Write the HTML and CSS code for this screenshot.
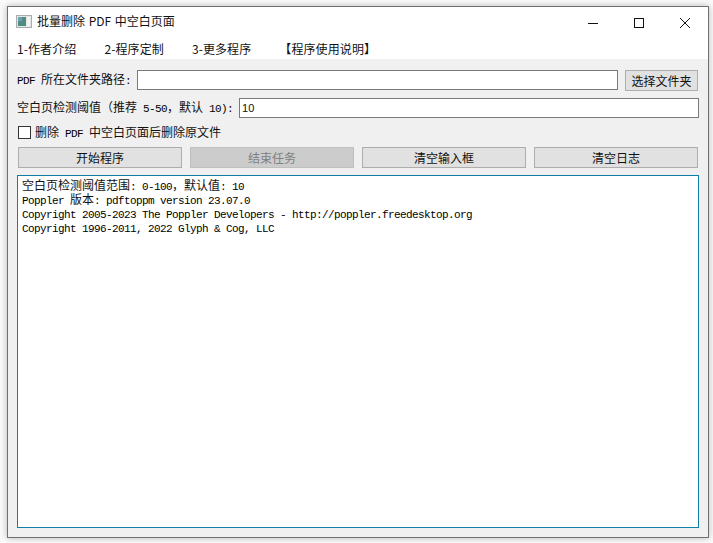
FILE: index.html
```html
<!DOCTYPE html>
<html lang="zh">
<head>
<meta charset="utf-8">
<title>批量删除 PDF 中空白页面</title>
<link rel="stylesheet" href="styles.css">
</head>
<body>
<div class="window">
  <div class="titlebar">
    <svg class="app-icon" width="16" height="13" viewBox="0 0 16 13">
      <rect x="0.5" y="0.5" width="15" height="12" fill="#e4e6e6" stroke="#a9adad"/>
      <rect x="2" y="2" width="8" height="9" fill="#4f8c84"/>
      <rect x="2" y="2" width="4" height="4" fill="#6f9fb0"/>
      <rect x="11" y="2" width="3" height="9" fill="#f3f3f3"/>
    </svg>
    <span class="title">批量删除 PDF 中空白页面</span>
    <div class="controls">
      <svg class="ctl" width="46" height="30" viewBox="0 0 46 30"><path d="M18 15.500H28" stroke="#111" fill="none"/></svg>
      <svg class="ctl" width="46" height="30" viewBox="0 0 46 30"><rect x="18.500" y="10.500" width="9" height="9" stroke="#111" fill="none"/></svg>
      <svg class="ctl" width="46" height="30" viewBox="0 0 46 30"><path d="M18 10L28 20M28 10L18 20" stroke="#111" fill="none"/></svg>
    </div>
  </div>
  <div class="menubar">
    <span class="menu-item">1-作者介绍</span>
    <span class="menu-item">2-程序定制</span>
    <span class="menu-item">3-更多程序</span>
    <span class="menu-item">【程序使用说明】</span>
  </div>
  <div class="content">
    <div class="row row-path">
      <label class="label"><span class="lat">PDF&nbsp;</span>所在文件夹路径<span class="lat">:</span></label>
      <div class="field field-grow"></div>
      <button class="btn btn-pick">选择文件夹</button>
    </div>
    <div class="row row-threshold">
      <label class="label">空白页检测阈值（推荐<span class="lat">&nbsp;5-50</span>，默认<span class="lat">&nbsp;10):</span></label>
      <div class="field field-grow field-value">10</div>
    </div>
    <div class="row row-check">
      <span class="checkbox"></span>
      <span class="label">删除<span class="lat">&nbsp;PDF&nbsp;</span>中空白页面后删除原文件</span>
    </div>
    <div class="actions">
      <button class="btn">开始程序</button>
      <button class="btn btn-disabled">结束任务</button>
      <button class="btn">清空输入框</button>
      <button class="btn">清空日志</button>
    </div>
    <div class="log">
      <div class="log-line">空白页检测阈值范围<span class="lat">: 0-100</span>，默认值<span class="lat">: 10</span></div>
      <div class="log-line"><span class="lat">Poppler&nbsp;</span>版本<span class="lat">: pdftoppm version 23.07.0</span></div>
      <div class="log-line"><span class="lat">Copyright 2005-2023 The Poppler Developers - http://poppler.freedesktop.org</span></div>
      <div class="log-line"><span class="lat">Copyright 1996-2011, 2022 Glyph &amp; Cog, LLC</span></div>
    </div>
  </div>
</div>
</body>
</html>
```
FILE: styles.css
```css
* { box-sizing: border-box; }
html, body { margin: 0; height: 100%; }
body {
  background: #fbfbfb;
  padding: 6px 0 0 7px;
  font-family: "Noto Sans CJK SC", "Liberation Sans", sans-serif;
  font-size: 12px;
  color: #111;
  overflow: hidden;
}
.window {
  width: 702px;
  height: 532px;
  border: 1px solid #707070;
  background: #f0f0f0;
  box-shadow: 0 0 7px rgba(0, 0, 0, 0.28);
  display: flex;
  flex-direction: column;
}
.titlebar {
  height: 31px;
  background: #fff;
  display: flex;
  align-items: center;
  padding-left: 8px;
  flex: none;
}
.app-icon { margin: -2px 5px 0 0; }
.title { font-size: 12px; line-height: 16px; margin-top: -3px; word-spacing: 1px; }
.controls { margin-left: auto; display: flex; }
.ctl { display: block; }
.menubar {
  height: 21px;
  background: #fff;
  display: flex;
  align-items: center;
  padding-left: 9px;
  flex: none;
}
.menu-item { margin-right: 28px; line-height: 16px; letter-spacing: 0.1px; }
.content {
  flex: 1;
  min-height: 0;
  display: flex;
  flex-direction: column;
  padding: 11px 9px 9px 9px;
}
.row { display: flex; align-items: center; }
.row-path { height: 21px; }
.row-path .label { margin-top: -2px; }
.row-threshold { height: 20px; margin-top: 7px; }
.row-check { height: 14px; margin-top: 7px; }
.label { white-space: nowrap; line-height: 14px; }
.row-check .label { margin-top: 1px; }
.lat {
  font-family: "Liberation Mono", monospace;
  font-size: 11px;
  letter-spacing: -0.6px;
  color: #000;
}
.field {
  height: 20px;
  background: #fff;
  border: 1px solid #7a7a7a;
  display: flex;
  align-items: center;
  padding-left: 2px;
  font-family: "Liberation Sans", sans-serif;
  font-size: 11px;
}
.field-grow { flex: 1; min-width: 0; }
.row-path .field { margin-left: 6px; margin-top: -1px; margin-right: 7px; }
.row-threshold .field { margin-left: 6px; }
.btn {
  font: inherit;
  color: #111;
  height: 21px;
  background: #e1e1e1;
  border: 1px solid #adadad;
  padding: 0;
}
.btn-pick { width: 73px; flex: none; margin-right: 1px; }
.btn-disabled { background: #cccccc; border-color: #bfbfbf; color: #808080; }
.checkbox {
  width: 13px;
  height: 13px;
  background: #fff;
  border: 1px solid #333;
  margin: 0 4px 0 1px;
  flex: none;
}
.actions {
  display: grid;
  grid-template-columns: repeat(4, 164px);
  column-gap: 8px;
  margin: 8px 0 0 1px;
}
.log {
  flex: 1;
  min-height: 0;
  margin-top: 7px;
  background: #fff;
  border: 1px solid #0f7ea8;
  padding: 2px 4px;
}
.log-line { height: 14px; line-height: 14px; white-space: nowrap; }
```
